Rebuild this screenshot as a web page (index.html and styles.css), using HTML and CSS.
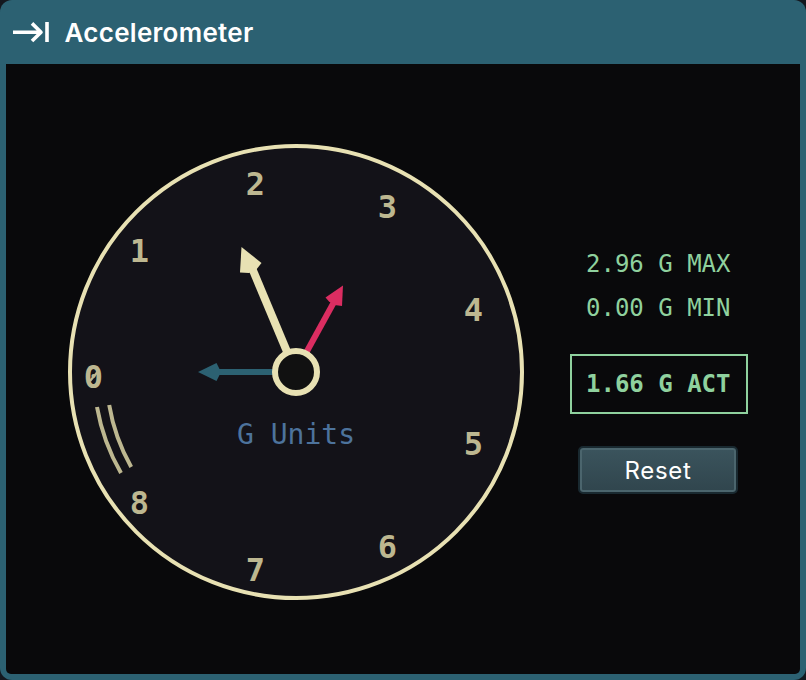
FILE: index.html
```html
<!DOCTYPE html>
<html lang="en">
<head>
<meta charset="utf-8">
<title>Accelerometer</title>
<link rel="stylesheet" href="styles.css">
</head>
<body>
<main class="window">
  <header class="titlebar">
    <svg class="icon" width="36" height="24" viewBox="0 0 36 24" fill="none" stroke="#fff" stroke-width="3.6">
      <path d="M0 12.2H28M19 3.4L28 12.2L19 21" stroke-linejoin="round"/>
      <path d="M34 2V22" stroke-width="3.6"/>
    </svg>
    <h1 class="title">Accelerometer</h1>
  </header>
  <div class="content">
    <svg class="dial" width="456" height="456" viewBox="68 144 456 456">
      <circle class="face" cx="296" cy="372" r="226"/>
      <g class="numbers">
        <text x="93.5" y="388">0</text>
        <text x="139.5" y="262">1</text>
        <text x="255.5" y="195">2</text>
        <text x="387.5" y="218">3</text>
        <text x="473.5" y="321">4</text>
        <text x="473.5" y="455">5</text>
        <text x="387.5" y="558">6</text>
        <text x="255.5" y="581">7</text>
        <text x="139.5" y="514">8</text>
      </g>
      <path class="zero-slash" d="M90 381L97.5 372"/>
      <g class="arcs">
        <path d="M97 407A202 202 0 0 0 121 473"/>
        <path d="M109.2 405A190 190 0 0 0 131.2 467"/>
      </g>
      <text class="unit" x="296" y="444">G Units</text>
      <g class="needle-now"><path class="shaft" d="M288 354L252 268"/><path class="head" d="M241.5 247L261.5 263L256 270L249 273L240 272.5Z"/></g>
      <g class="needle-max"><path class="shaft" d="M306 353L334 302"/><path class="head" d="M343 285.5L342 306L334.5 305L329 301.5L325.5 297.5Z"/></g>
      <g class="needle-min"><path class="shaft" d="M275 372H217"/><path class="head" d="M198 372L216.5 363L219.5 369V375L216.5 381Z"/></g>
      <circle class="hub" cx="296" cy="372" r="21"/>
    </svg>
    <section class="readout">
      <div class="value">2.96 G MAX</div>
      <div class="value">0.00 G MIN</div>
      <div class="value actual">1.66 G ACT</div>
      <button class="reset">Reset</button>
    </section>
  </div>
</main>
</body>
</html>
```

FILE: styles.css
```css
* { box-sizing: border-box; }
body { margin: 0; background: #14181f; }
.window {
  width: 806px; height: 680px;
  display: flex; flex-direction: column;
  padding: 0 6px 6px;
  background: #2c6172;
  border-radius: 12px;
}
.titlebar { height: 64px; display: flex; align-items: center; padding-left: 7px; gap: 15.5px; }
.icon { flex: none; }
.title { margin: 0; font: 600 26px Inter, sans-serif; letter-spacing: .28px; color: #fff; }
.content {
  flex: 1; display: flex; align-items: flex-start;
  padding: 80px 52px 0 62px;
  justify-content: space-between;
  background: #09090b;
  border-radius: 0 0 5px 5px;
}
.dial { flex: none; display: block; }
.face { fill: #131218; stroke: #e8e1b3; stroke-width: 4; }
.numbers { font: bold 32px "DejaVu Sans Mono", monospace; fill: #bdb790; text-anchor: middle; }
.zero-slash { stroke: #bdb790; stroke-width: 2.2; }
.arcs { fill: none; stroke: #bdb790; stroke-width: 4; }
.unit { font: 28px "DejaVu Sans Mono", monospace; fill: #4d739c; text-anchor: middle; }
.shaft { stroke-width: 8; fill: none; }
.needle-now { stroke: #e8e1b3; fill: #e8e1b3; }
.needle-max { stroke: #db2d61; fill: #db2d61; }
.needle-min { stroke: #2c6172; fill: #2c6172; }
.needle-max .shaft, .needle-min .shaft { stroke-width: 6; }
.head { stroke: none; }
.hub { fill: #111; stroke: #e8e1b3; stroke-width: 6; }
.readout {
  width: 178px; margin-top: 98px;
  display: flex; flex-direction: column; align-items: center;
  font: 24px/44px "DejaVu Sans Mono", monospace; color: #8fd19e;
}
.value { width: 178px; padding-left: 16px; white-space: pre; }
.actual {
  height: 60px; margin-top: 24px; padding-left: 14px;
  border: 2px solid #8fd19e;
  font-weight: bold; line-height: 56px;
}
.reset {
  width: 160px; height: 48px; margin: 32px 2px 0 0; padding: 0;
  border: 2px solid #192930; border-radius: 5px;
  box-shadow: inset 0 0 0 2px #4b656d;
  background: linear-gradient(#3b545d, #30454d);
  color: #fff; font: 24px Inter, sans-serif; letter-spacing: .7px;
}
```
